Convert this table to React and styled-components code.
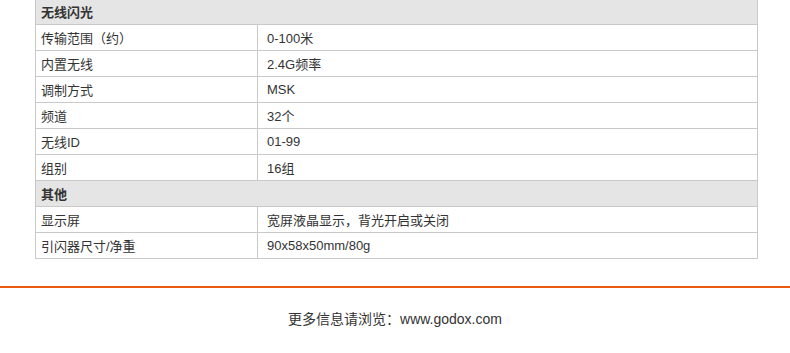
import React from 'react';
import styled, { createGlobalStyle } from 'styled-components';

const GlobalStyle = createGlobalStyle`
  html, body {
    margin: 0;
    padding: 0;
    background: #ffffff;
  }
  body {
    font-family: "Liberation Sans", "Noto Sans CJK SC", sans-serif;
    color: #333333;
  }
`;

const Page__styled = styled.div`
  width: 790px;
  height: 353px;
  overflow: hidden;
  display: flex;
  flex-direction: column;
`;

const SpecTable__styled = styled.div`
  margin: -2px 32px 0 35px;
  border: 1px solid #c9c9c9;
  border-bottom: none;
  display: grid;
  grid-template-columns: 221px 1fr;
`;

const SectionHead__styled = styled.div`
  grid-column: 1 / -1;
  height: 25px;
  padding-left: 5px;
  display: flex;
  align-items: center;
  font-size: 13px;
  font-weight: 700;
  background-color: #e5e5e5;
  border-bottom: 1px solid #c9c9c9;
`;

const Cell__styled = styled.div`
  height: 25px;
  padding-left: ${props => (props.value ? '9px' : '5px')};
  display: flex;
  align-items: center;
  font-size: 13px;
  white-space: nowrap;
  border-bottom: 1px solid #c9c9c9;
  border-left: ${props => (props.value ? '1px solid #c9c9c9' : 'none')};
`;

const Divider__styled = styled.div`
  margin-top: 27px;
  height: 2px;
  background-color: #e85a0c;
`;

const Footer__styled = styled.div`
  margin-top: 20px;
  text-align: center;
  font-size: 14px;
  color: #333333;
`;

const sections = [
  {
    title: '无线闪光',
    rows: [
      ['传输范围（约）', '0-100米'],
      ['内置无线', '2.4G频率'],
      ['调制方式', 'MSK'],
      ['频道', '32个'],
      ['无线ID', '01-99'],
      ['组别', '16组'],
    ],
  },
  {
    title: '其他',
    rows: [
      ['显示屏', '宽屏液晶显示，背光开启或关闭'],
      ['引闪器尺寸/净重', '90x58x50mm/80g'],
    ],
  },
];

export default function App() {
  return (
    <Page__styled>
      <GlobalStyle />
      <SpecTable__styled>
        {sections.map(section => (
          <React.Fragment key={section.title}>
            <SectionHead__styled>{section.title}</SectionHead__styled>
            {section.rows.map(([label, value]) => (
              <React.Fragment key={label}>
                <Cell__styled>{label}</Cell__styled>
                <Cell__styled value>{value}</Cell__styled>
              </React.Fragment>
            ))}
          </React.Fragment>
        ))}
      </SpecTable__styled>
      <Divider__styled />
      <Footer__styled>更多信息请浏览：www.godox.com</Footer__styled>
    </Page__styled>
  );
}
